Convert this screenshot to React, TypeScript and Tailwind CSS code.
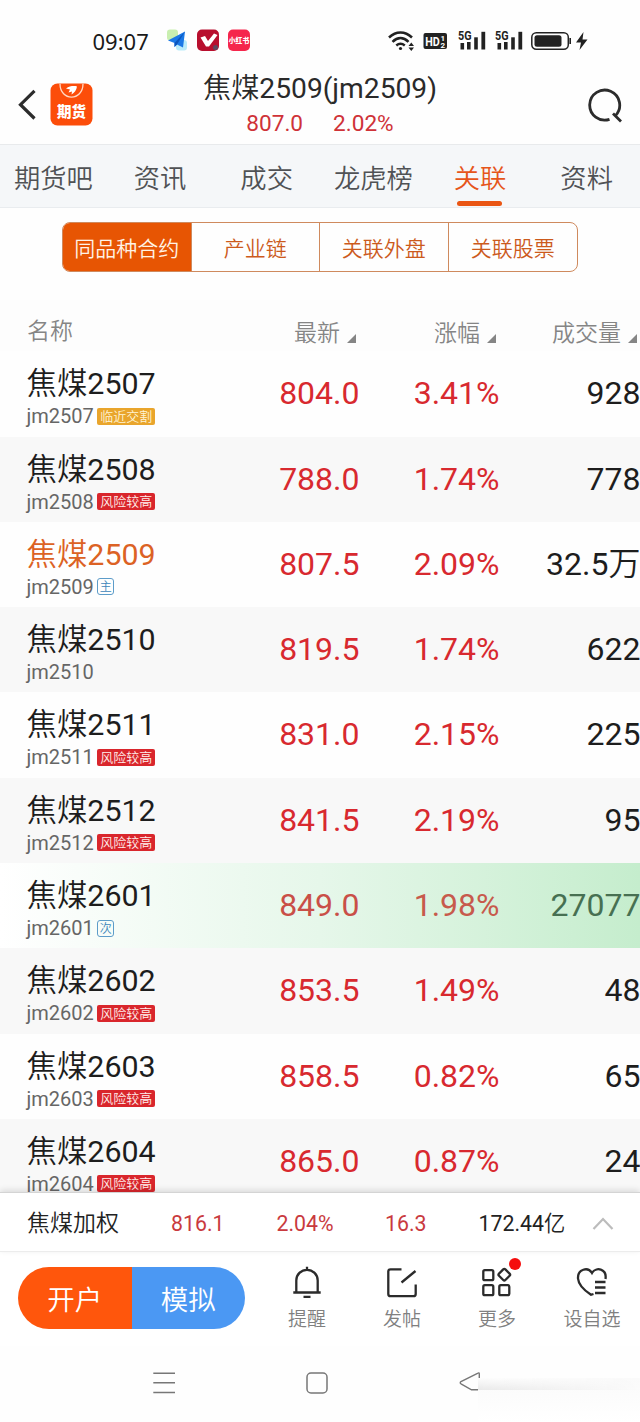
import React from "react";

type Tag = "near" | "risk" | "main" | "second" | null;

interface Contract {
  id: string;
  last: string;
  change: string;
  volume: string;
  tag: Tag;
}

const contracts: Contract[] = [
  { id: "2507", last: "804.0", change: "3.41%", volume: "928", tag: "near" },
  { id: "2508", last: "788.0", change: "1.74%", volume: "778", tag: "risk" },
  { id: "2509", last: "807.5", change: "2.09%", volume: "32.5万", tag: "main" },
  { id: "2510", last: "819.5", change: "1.74%", volume: "622", tag: null },
  { id: "2511", last: "831.0", change: "2.15%", volume: "225", tag: "risk" },
  { id: "2512", last: "841.5", change: "2.19%", volume: "95", tag: "risk" },
  { id: "2601", last: "849.0", change: "1.98%", volume: "27077", tag: "second" },
  { id: "2602", last: "853.5", change: "1.49%", volume: "48", tag: "risk" },
  { id: "2603", last: "858.5", change: "0.82%", volume: "65", tag: "risk" },
  { id: "2604", last: "865.0", change: "0.87%", volume: "24", tag: "risk" },
];

const tabs = ["期货吧", "资讯", "成交", "龙虎榜", "关联", "资料"];
const segments = ["同品种合约", "产业链", "关联外盘", "关联股票"];

function Signal() {
  return (
    <svg className="overflow-visible" width="28" height="20" viewBox="0 0 28 20" fill="#222">
      <text x="0" y="9" fontSize="12" fontWeight="700" textLength="13.5" lengthAdjust="spacingAndGlyphs">5G</text>
      <rect x="2.5" y="12" width="3.6" height="6.5" />
      <rect x="9" y="11" width="3.6" height="7.5" />
      <rect x="16.2" y="6.3" width="3.6" height="12.2" />
      <rect x="23.4" y="0.8" width="3.8" height="17.7" />
    </svg>
  );
}

function StatusBar() {
  return (
    <div className="flex h-[60px] items-center pt-[22px]">
      <span className="ml-[92.5px] w-[73px] font-['Noto_Sans'] text-[22px] leading-[38px] text-[#1a1a1a]">09:07</span>
      <svg width="86" height="24" viewBox="0 0 86 24">
        <rect x="1" y="0.5" width="11" height="11" rx="3" fill="#c9efb0" />
        <rect x="10" y="11" width="11" height="10.5" rx="3" fill="#b9ebfa" />
        <path d="M2 11.5 19 2.5 17 18.5 11 15.5 8.5 18V14Z" fill="#1a78e6" />
        <path d="M8.5 14 19 2.5 11 15.5 8.5 18Z" fill="#0a55bd" />
        <rect x="31" y="0.5" width="22" height="21.5" rx="5" fill="#b80f2e" />
        <path d="M34.5 8.5 39 7l3 5L48 4.5 51.5 6 43 17.5H40Z" fill="#fff" />
        <circle cx="49.5" cy="18.5" r="2.5" fill="#5b4a60" />
        <rect x="62" y="0.5" width="22" height="21.5" rx="5" fill="#f5264c" />
        <text x="73" y="14" textAnchor="middle" fontSize="6.8" fontWeight="900" fill="#fff">小红书</text>
      </svg>
      <div className="ml-[136.5px] flex items-center">
        <svg width="27" height="22" viewBox="0 0 27 22" fill="none" stroke="#222" strokeWidth="2.5">
          <path d="M1 7.5C8 0.8 17 0.8 24 7.5" />
          <path d="M4.5 11.8C9.5 6.8 15.5 6.8 20.5 11.8" />
          <path d="M8.3 15.5C11 13.2 14 13.2 16.8 15.5" />
          <circle cx="12.5" cy="18.5" r="1.6" fill="#222" stroke="none" />
          <path d="M20.5 16 23.3 12.5 26 16ZM20.5 17.5H26L23.3 21Z" fill="#222" stroke="none" />
        </svg>
        <svg className="ml-[7.5px]" width="24" height="18" viewBox="0 0 24 18">
          <rect x="0.5" y="1" width="23.5" height="16" rx="2" fill="#222" />
          <text x="2.3" y="13.5" fontSize="12.5" fontWeight="700" fill="#fff" textLength="14.5" lengthAdjust="spacingAndGlyphs">HD</text>
          <text x="17.5" y="8.5" fontSize="8" fontWeight="700" fill="#fff">1</text>
          <text x="17.5" y="15.5" fontSize="8" fontWeight="700" fill="#fff">2</text>
        </svg>
        <div className="ml-[11px] flex gap-[9px]"><Signal /><Signal /></div>
        <svg className="ml-[8.5px]" width="58" height="20" viewBox="0 0 58 20">
          <rect x="0.8" y="1.8" width="36.5" height="16.5" rx="4.5" fill="none" stroke="#222" strokeWidth="1.5" />
          <rect x="3.5" y="4.3" width="27" height="11.5" rx="2.5" fill="#222" />
          <path d="M39.2 7v6" stroke="#222" strokeWidth="1.6" />
          <path d="M52.5 1 45 11.5h5L48.5 19 56.5 8.5h-5Z" fill="#222" />
        </svg>
      </div>
    </div>
  );
}

function Header() {
  return (
    <header className="grid h-[85px] grid-cols-[160px_320px_160px] border-b border-[#e8eaec]">
      <div className="flex items-start pt-[23px]">
        <svg className="mt-[6px] ml-[17px]" width="20" height="32" viewBox="0 0 20 32" fill="none" stroke="#2c2c2c" strokeWidth="3.2">
          <path d="M17.5 1.8 3.5 15.7 17.5 29.5" />
        </svg>
        <svg className="ml-[13px]" width="43" height="43" viewBox="0 0 43 43">
          <rect x="0.5" y="0.5" width="42" height="42" rx="7" fill="#fc4d0a" />
          <path d="M10 0.8C10 18.5 33 18.5 33 0.8" fill="none" stroke="#ffd9c5" strokeWidth="1.3" />
          <path d="M16 5.5C20 2.5 25 3 27 3.5 26.5 7 24.5 10 21.5 11.5L22 8.5 18.5 9.5 20 6.5Z" fill="#fff" />
          <text x="21.5" y="33.5" textAnchor="middle" fontSize="14.5" fontWeight="900" fill="#fff">期货</text>
        </svg>
      </div>
      <div className="flex flex-col items-center pt-[10px]">
        <h1 className="text-[28.2px] leading-[37px] text-[#2a2a2a]"><span className="font-[350]">焦煤</span>2509(jm2509)</h1>
        <div className="flex gap-[30px] pt-[3px] text-[22.6px] leading-[28px] text-[#cf3238]">
          <span>807.0</span>
          <span>2.02%</span>
        </div>
      </div>
      <svg className="mt-[28px] ml-[107px]" width="36" height="36" viewBox="0 0 36 36" fill="none" stroke="#2c2c2c" strokeWidth="2.8">
        <path d="M22.5 31.3A15 15 0 1 1 28.5 27.5M26 25.5 34 33.5" />
      </svg>
    </header>
  );
}

function Tabs() {
  return (
    <nav className="grid h-[63px] grid-cols-6 border-b border-[#e9ecef] bg-[#f5f7f9] text-[26.3px] font-[350]">
      {tabs.map((t) => (
        <div key={t} className={t === "关联" ? "flex flex-col items-center text-[#e6551a]" : "flex flex-col items-center text-[#505255]"}>
          <span className="pt-[14px] leading-[41px] whitespace-nowrap">{t}</span>
          {t === "关联" && <span className="mt-[1px] h-[5px] w-[45px] rounded-full bg-[#ea5614]" />}
        </div>
      ))}
    </nav>
  );
}

function Segments() {
  return (
    <div className="mx-[62px] mt-[14px] grid h-[50px] grid-cols-4 divide-x divide-[#cf8a5e] overflow-hidden rounded-[8px] border border-[#cf8a5e] text-[21px] leading-[52px] font-[350]">
      {segments.map((s, i) => (
        <div key={s} className={i === 0 ? "bg-[#e75503] text-center whitespace-nowrap text-[#fff3e6]" : "text-center whitespace-nowrap text-[#cc5a1c]"}>
          {s}
        </div>
      ))}
    </div>
  );
}

function SortHeader({ label }: { label: string }) {
  return (
    <div className="flex items-center justify-end gap-[7px]">
      <span className="leading-[30px]">{label}</span>
      <svg className="mt-[10px]" width="9" height="9" viewBox="0 0 9 9"><path d="M9 0V9H0Z" fill="#858585" /></svg>
    </div>
  );
}

function TagLabel({ tag }: { tag: Tag }) {
  if (tag === "near") return <span className="h-[17px] w-[58px] rounded-[2px] bg-[#e9a52c] text-center text-[13px] leading-[17px] font-[350] text-[#fff4d6]">临近交割</span>;
  if (tag === "risk") return <span className="h-[17px] w-[58px] rounded-[2px] bg-[#d9262c] text-center text-[13px] leading-[17px] font-[350] text-[#fff0ec]">风险较高</span>;
  if (tag === "main" || tag === "second")
    return (
      <span className="h-[17px] w-[17px] rounded-[3px] border border-[#5d9cc9] text-center text-[12px] leading-[16px] font-[350] text-[#3c86ba]">
        {tag === "main" ? "主" : "次"}
      </span>
    );
  return null;
}

function Row({ c, index }: { c: Contract; index: number }) {
  const flash = c.tag === "second";
  const background = flash
    ? "bg-linear-to-r from-white via-[#e6f7ea] to-[#c5edcd]"
    : index % 2
      ? "bg-[#f8f8f8]"
      : "bg-[#fefefe]";
  return (
    <div className={`grid h-[85.3px] shrink-0 grid-cols-[219px_140.5px_140px_141px] ${background}`}>
      <div className="pt-[15px] pl-[26.5px]">
        <div className={c.tag === "main" ? "text-[30.4px] leading-[36px] text-[#dc6224]" : "text-[30.4px] leading-[36px] text-[#1d1d1d]"}><span className="font-[350]">焦煤</span>{c.id}</div>
        <div className="mt-[2px] flex items-center gap-[3.5px]">
          <span className="text-[20px] leading-[24px] text-[#666]">jm{c.id}</span>
          <TagLabel tag={c.tag} />
        </div>
      </div>
      <div className={flash ? "text-right text-[32px] leading-[85px] text-[#c94f47]" : "text-right text-[32px] leading-[85px] text-[#d8292f]"}>{c.last}</div>
      <div className={flash ? "text-right text-[32px] leading-[85px] text-[#c75a4c]" : "text-right text-[32px] leading-[85px] text-[#d8292f]"}>{c.change}</div>
      <div className={flash ? "text-right text-[32px] leading-[85px] text-[#477052]" : "text-right text-[32px] leading-[85px] text-[#1d1d1d]"}>
        {c.volume.replace("万", "")}
        {c.volume.endsWith("万") && <span className="font-[350]">万</span>}
      </div>
    </div>
  );
}

function Table() {
  return (
    <section className="mt-[28px] flex h-[892px] flex-col overflow-hidden">
      <div className="grid h-[51.3px] shrink-0 grid-cols-[219px_137px_140px_141px] bg-[#fdfdfd] pt-[16px] text-[23px] leading-[30px] font-[350] text-[#858585]">
        <div className="mt-[1px] pl-[27px]">名称</div>
        <SortHeader label="最新" />
        <SortHeader label="涨幅" />
        <SortHeader label="成交量" />
      </div>
      {contracts.map((c, i) => <Row key={c.id} c={c} index={i} />)}
    </section>
  );
}

function IndexBar() {
  return (
    <div className="relative flex h-[60px] items-center border-t border-b border-t-[#d4d4d4] border-b-[#ececec] bg-white pt-[3px] text-[21.3px] leading-[56px] text-[#c93a3e] shadow-[0_-2px_6px_rgba(0,0,0,0.12)]">
      <span className="w-[144px] pt-[1px] pl-[27px] text-[23px] font-[350] text-[#222]">焦煤加权</span>
      <span className="ml-[27px] w-[105.5px]">816.1</span>
      <span className="w-[108.5px]">2.04%</span>
      <span className="w-[93.5px]">16.3</span>
      <span className="w-[113.5px] text-[#222]">172.44<span className="font-[350]">亿</span></span>
      <svg width="22" height="14" viewBox="0 0 22 14" fill="none" stroke="#bcbcbc" strokeWidth="2.2"><path d="M1.5 12 11 2 20.5 12" /></svg>
    </div>
  );
}

function Action({ label, children }: { label: string; children: React.ReactNode }) {
  return (
    <div className="flex w-[95px] flex-col items-center">
      <svg width="36" height="36" viewBox="0 0 36 36" fill="none" stroke="#2b2b2b" strokeWidth="2.3">{children}</svg>
      <span className="mt-[5px] text-[19px] leading-[28px] font-[350] whitespace-nowrap text-[#808080]">{label}</span>
    </div>
  );
}

function BottomBar() {
  return (
    <div className="flex h-[94px] items-start bg-white">
      <div className="mt-[15px] ml-[18px] grid h-[62px] w-[227px] grid-cols-[113.5px_113.5px] overflow-hidden rounded-full text-center text-[27.5px] leading-[67px] font-[350] text-white">
        <span className="h-[62px] bg-[#ff560c]">开户</span>
        <span className="h-[62px] bg-[#4b98f3]">模拟</span>
      </div>
      <div className="relative mt-[13px] ml-[14.5px] flex">
        <Action label="提醒">
          <path d="M18 1.8v3M7.3 27.5V15.5A10.7 10.7 0 0 1 28.7 15.5V27.5M4.3 27.5H31.7M14.5 31.8h7" />
        </Action>
        <Action label="发帖">
          <path d="M17.5 4.3H6.5Q4.3 4.3 4.3 6.5V29Q4.3 31.2 6.5 31.2H29.5Q31.7 31.2 31.7 29V19.5M17.5 17.5 31.5 6" />
        </Action>
        <Action label="更多">
          <rect x="4.3" y="5.2" width="10" height="10" rx="1.5" />
          <rect x="4.3" y="20.2" width="10" height="10" rx="1.5" />
          <rect x="20.3" y="20.2" width="10" height="10" rx="1.5" />
          <rect x="20.8" y="5.2" width="9" height="9" rx="1.5" transform="rotate(45 25.3 9.7)" />
        </Action>
        <Action label="设自选">
          <path d="M31.5 14C33 3.5 22 1.5 18 8 14 1.5 3.5 4 4 13.5 4.5 20 12 26.5 17 29.8L19.5 29M21 17H31.5M21 22.5H31.5M21 28H31.5" />
        </Action>
        <span className="absolute top-[-7px] left-[249.5px] h-[12px] w-[12px] rounded-full bg-[#f50d0d]" />
      </div>
    </div>
  );
}

function SystemNav() {
  return (
    <div className="relative flex h-[76px] items-start bg-[#fefefe] pt-[25px]">
      <svg className="ml-[152px]" width="24" height="24" viewBox="0 0 24 24" stroke="#777" strokeWidth="1.6"><path d="M1.3 2.2H23M1.3 11.8H23M1.3 21.5H23" /></svg>
      <svg className="ml-[129px]" width="24" height="24" viewBox="0 0 24 24" fill="none" stroke="#777" strokeWidth="1.5"><rect x="2" y="2" width="20" height="20" rx="4" /></svg>
      <svg className="ml-[129px]" width="24" height="24" viewBox="0 0 24 24" fill="none" stroke="#777" strokeWidth="1.4"><path d="M21.3 9V3Q21.3 1.3 19.5 2.3L3 10.5Q1.5 11.7 3 12.8L13.5 18.8H22" /></svg>
      <div className="absolute top-[32px] left-[478px] h-[44px] w-[162px] bg-linear-to-b from-[#fafafa] to-white">
        <div className="h-[12px] bg-linear-to-b from-[#fdfdfd] to-[#e9e9e9] mask-r-from-0%" />
      </div>
    </div>
  );
}

export default function App() {
  return (
    <main lang="zh-CN" className="flex h-[1422px] w-[640px] flex-col overflow-hidden bg-[#fefefe] font-[Roboto,'Noto_Sans_CJK_SC',sans-serif]">
      <StatusBar />
      <Header />
      <Tabs />
      <Segments />
      <Table />
      <IndexBar />
      <BottomBar />
      <SystemNav />
    </main>
  );
}
